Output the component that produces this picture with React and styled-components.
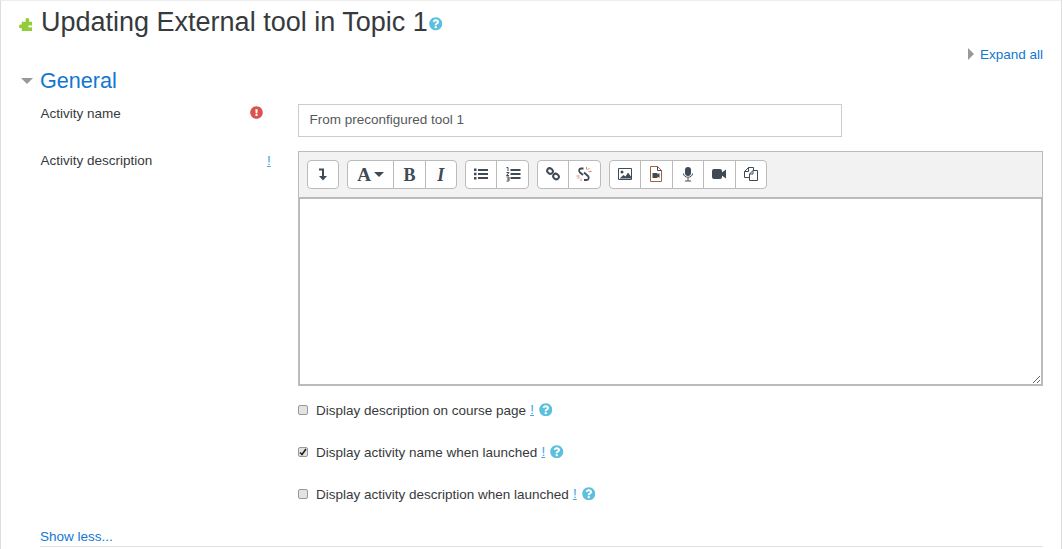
import React from "react";
import styled, { createGlobalStyle } from "styled-components";
import { FaQuestionCircle, FaExclamationCircle } from "react-icons/fa";

const GlobalStyle = createGlobalStyle`
  html, body {
    margin: 0;
    padding: 0;
    background: #fff;
    overflow: hidden;
  }
  body {
    font-family: "Liberation Sans", Arial, sans-serif;
    font-size: 13.5px;
    color: #373a3c;
  }
`;

const Page = styled.div`
  box-sizing: border-box;
  width: 1062px;
  height: 549px;
  overflow: hidden;
  border-left: 1px solid #ddd;
  border-right: 1px solid #ddd;
  border-top: 1px solid #eee;
  padding: 0 18px 0 17px;
`;

const TitleRow = styled.div`
  display: flex;
  align-items: center;
  height: 41px;
  margin-top: 1px;
`;

const PluginIcon = styled.svg`
  width: 15px;
  height: 15px;
  margin: 3px 8px 0 0;
  flex: none;
`;

const Title = styled.h2`
  margin: 0;
  font-size: 27px;
  font-weight: 400;
  line-height: 41px;
`;

const HelpIcon = styled(FaQuestionCircle)`
  width: 13.5px;
  height: 13.5px;
  color: #5bc0de;
  flex: none;
`;

const TitleHelp = styled(HelpIcon)`
  margin: 3px 0 0 1px;
`;

const ExpandRow = styled.div`
  display: flex;
  justify-content: flex-end;
  align-items: center;
  height: 20px;
  margin-top: 1px;
`;

const RightCaret = styled.span`
  width: 0;
  height: 0;
  border-left: 6px solid #999;
  border-top: 6px solid transparent;
  border-bottom: 6px solid transparent;
  margin-right: 6px;
`;

const Link = styled.a`
  color: #1177d1;
  text-decoration: none;
`;

const SectionRow = styled.div`
  display: flex;
  align-items: center;
  height: 32px;
  margin-top: 1px;
`;

const DownCaret = styled.span`
  width: 0;
  height: 0;
  border-top: 6px solid #999;
  border-left: 6px solid transparent;
  border-right: 6px solid transparent;
  margin: 0 7px 0 3px;
`;

const SectionTitle = styled.h3`
  margin: 0;
  font-size: 21.6px;
  font-weight: 400;
  color: #1177d1;
`;

const FormRow = styled.div`
  display: grid;
  grid-template-columns: 209.5px 48px 1fr;
  padding-left: 22.5px;
  margin-top: ${(p) => p.$top}px;
`;

const Label = styled.label`
  line-height: 20px;
`;

const ErrorIcon = styled(FaExclamationCircle)`
  width: 13px;
  height: 13px;
  color: #d9534f;
  margin-top: 2px;
`;

const Bang = styled.span`
  color: #3aa3e3;
  line-height: 20px;
  text-decoration: underline;
`;

const NameBang = styled(Bang)`
  margin-left: 17px;
`;

const TextInput = styled.input`
  box-sizing: border-box;
  width: 544px;
  height: 33px;
  padding: 0 10.5px 2px;
  border: 1px solid #ccc;
  font: inherit;
  color: #55595c;
  outline: none;
`;

const Editor = styled.div`
  display: flex;
  flex-direction: column;
  width: 745px;
`;

const Toolbar = styled.div`
  box-sizing: border-box;
  display: flex;
  gap: 8px;
  height: 46px;
  padding: 8px 8px 0;
  background: #f2f2f2;
  border: 1px solid #bbb;
  border-bottom: 0;
`;

const ButtonGroup = styled.div`
  display: flex;
  height: 29px;
  box-sizing: border-box;
  background: #fff;
  border: 1px solid #bbb;
  border-radius: 4px;
`;

const ToolButton = styled.span`
  display: flex;
  align-items: center;
  justify-content: center;
  width: ${(p) => p.$w || 30.4}px;
  color: #3f4a55;
  & + & {
    border-left: 1px solid #bbb;
  }
`;

const Glyph = styled.span`
  font-family: "Liberation Serif", "Times New Roman", serif;
  font-size: ${(p) => p.$size || 18}px;
  font-weight: 700;
  font-style: ${(p) => (p.$italic ? "italic" : "normal")};
  line-height: 1;
`;

const ToolIcon = styled.svg`
  width: 16px;
  height: 16px;
  margin-bottom: 1px;
  flex: none;
`;

const Area = styled.div`
  box-sizing: border-box;
  height: 189px;
  background: #fff;
  border: 2px solid #bbb;
  overflow: auto;
  resize: vertical;
`;

const SmallCaret = styled.span`
  width: 0;
  height: 0;
  margin-left: 3px;
  border-top: 5px solid #3f4a55;
  border-left: 5px solid transparent;
  border-right: 5px solid transparent;
`;

const CheckList = styled.div`
  display: flex;
  flex-direction: column;
  gap: 22px;
  margin: 14px 0 0 257px;
  padding-left: 23px;
`;

const CheckRow = styled.div`
  display: flex;
  align-items: center;
  height: 20px;
`;

const Box = styled.span`
  box-sizing: border-box;
  display: flex;
  align-items: center;
  justify-content: center;
  width: 10px;
  height: 10px;
  margin-right: 8px;
  background: #e3e3e3;
  border: 1px solid #999;
  border-radius: 2px;
`;

const CheckHelp = styled(HelpIcon)`
  margin-left: 5px;
  margin-top: -1px;
`;

const CheckBang = styled(Bang)`
  margin-left: 4px;
`;

const FooterLink = styled.div`
  margin: 23px 0 0 22px;
  line-height: 19px;
  border-bottom: 1px solid #dee2e6;
`;

const INK = "#3f4a55";

const Icon = ({ children }) => <ToolIcon viewBox="0 0 16 16">{children}</ToolIcon>;

const Check = ({ checked, label }) => (
  <CheckRow>
    <Box>
      {checked && (
        <svg width="8" height="8" viewBox="0 0 8 8">
          <path d="M1 4.5 L3 6.5 L7 1" stroke="#222" strokeWidth="1.6" fill="none" />
        </svg>
      )}
    </Box>
    {label}
    <CheckBang>!</CheckBang>
    <CheckHelp />
  </CheckRow>
);

export default function App() {
  return (
    <>
      <GlobalStyle />
      <Page>
        <TitleRow>
          <PluginIcon viewBox="0 0 16 16">
            <path
              d="M4 5h4.200C7.600 3 8 1 10 1s2.400 2 1.800 4H15v4h-1.500c-1-.8-2.500 0-2.500 1s1.500 1.800 2.500 1H15v4H4v-3.200C3 12.500 1 12 1 10s2-2.500 3-1.800z"
              fill="#92cc3a"
            />
          </PluginIcon>
          <Title>Updating External tool in Topic 1</Title>
          <TitleHelp />
        </TitleRow>
        <ExpandRow>
          <RightCaret />
          <Link>Expand all</Link>
        </ExpandRow>
        <SectionRow>
          <DownCaret />
          <SectionTitle>General</SectionTitle>
        </SectionRow>
        <FormRow $top={7}>
          <Label>Activity name</Label>
          <ErrorIcon />
          <TextInput defaultValue="From preconfigured tool 1" />
        </FormRow>
        <FormRow $top={14}>
          <Label>Activity description</Label>
          <NameBang>!</NameBang>
          <Editor>
            <Toolbar>
              <ButtonGroup>
                <ToolButton $w={30}>
                  <Icon>
                    <path d="M4 3.500H8V10" fill="none" stroke={INK} strokeWidth="2" />
                    <path d="M4 10h8l-4 4.500z" fill={INK} />
                  </Icon>
                </ToolButton>
              </ButtonGroup>
              <ButtonGroup>
                <ToolButton $w={45.2}>
                  <Glyph $size={19}>A</Glyph>
                  <SmallCaret />
                </ToolButton>
                <ToolButton><Glyph>B</Glyph></ToolButton>
                <ToolButton><Glyph $italic>I</Glyph></ToolButton>
              </ButtonGroup>
              <ButtonGroup>
                <ToolButton>
                  <Icon>
                    <path d="M1 2.500h2.500v2.500H1zM1 6.800h2.500v2.500H1zM1 11h2.500v2.500H1z" fill={INK} />
                    <path d="M5 3h10v2H5zM5 7h10v2H5zM5 11h10v2H5z" fill={INK} />
                  </Icon>
                </ToolButton>
                <ToolButton>
                  <Icon>
                    <path d="M1.500 1.500h1.500v3.500M1.500 6.500h2.500l-2.500 3h2.500M1.500 11h2.500v4h-2.500M2 13h2" fill="none" stroke={INK} />
                    <path d="M5.500 3h10v2h-10zM5.500 7h10v2h-10zM5.500 11h10v2h-10z" fill={INK} />
                  </Icon>
                </ToolButton>
              </ButtonGroup>
              <ButtonGroup>
                <ToolButton>
                  <Icon>
                    <g fill="none" stroke={INK} strokeWidth="2">
                      <ellipse cx="5" cy="5" rx="3" ry="2.500" transform="rotate(40 5 5)" />
                      <ellipse cx="11" cy="10.500" rx="3" ry="2.500" transform="rotate(40 11 10.500)" />
                    </g>
                  </Icon>
                </ToolButton>
                <ToolButton>
                  <Icon>
                    <path d="M7.500 2.500H5C3 2.500 2.500 5 4 6.500L7 9" fill="none" stroke={INK} strokeWidth="1.800" />
                    <path d="M8 6.500l4 3.500c1.500 1.500.5 4-1.500 4H8" fill="none" stroke={INK} strokeWidth="1.800" />
                    <path d="M10.500 1v2.500M13.500 2l-2 2M15.500 5.500h-3M.5 10h3M1.500 13l2-2M5 15v-2.500" stroke="#d98a6a" strokeWidth="1" />
                  </Icon>
                </ToolButton>
              </ButtonGroup>
              <ButtonGroup>
                <ToolButton $w={30.5}>
                  <Icon>
                    <path d="M1.500 2.500h13v11h-13z" fill="#fff" stroke={INK} />
                    <circle cx="5" cy="6" r="1.500" fill={INK} />
                    <path d="M2.500 12.500l4-3.500 2 1.500 2.500-4 3 4v2z" fill={INK} />
                  </Icon>
                </ToolButton>
                <ToolButton $w={30.5}>
                  <Icon>
                    <path d="M2.500 .5h7l4 4v11h-11z" fill="#fff" stroke="#a5603f" />
                    <path d="M9.500 .5v4h4" fill="none" stroke={INK} />
                    <path d="M4.500 7h5v1.500l2-1.500v5l-2-1.500V12h-5z" fill={INK} />
                  </Icon>
                </ToolButton>
                <ToolButton $w={30.5}>
                  <Icon>
                    <rect x="5" y="1" width="6" height="9" rx="3" fill={INK} />
                    <path d="M3.500 7.500c0 5 9 5 9 0M8 12v2.500M5 15h6" fill="none" stroke={INK} />
                  </Icon>
                </ToolButton>
                <ToolButton $w={30.5}>
                  <Icon>
                    <rect x="1" y="3" width="10" height="10" rx="2" fill={INK} />
                    <path d="M10 7l5-3.500v9L10 9z" fill={INK} />
                  </Icon>
                </ToolButton>
                <ToolButton $w={30.5}>
                  <Icon>
                    <path d="M1.500 5.500l4-4h5v10h-9z" fill="#fff" stroke={INK} />
                    <path d="M1.500 5.500h4v-4" fill="none" stroke={INK} />
                    <path d="M6.500 8l3.500-3.500h4.500v10h-8z" fill="#fff" stroke={INK} />
                    <path d="M6.500 8h3.500V4.500" fill="none" stroke={INK} />
                  </Icon>
                </ToolButton>
              </ButtonGroup>
            </Toolbar>
            <Area />
          </Editor>
        </FormRow>
        <CheckList>
          <Check label="Display description on course page" />
          <Check checked label="Display activity name when launched" />
          <Check label="Display activity description when launched" />
        </CheckList>
        <FooterLink>
          <Link>Show less...</Link>
        </FooterLink>
      </Page>
    </>
  );
}
